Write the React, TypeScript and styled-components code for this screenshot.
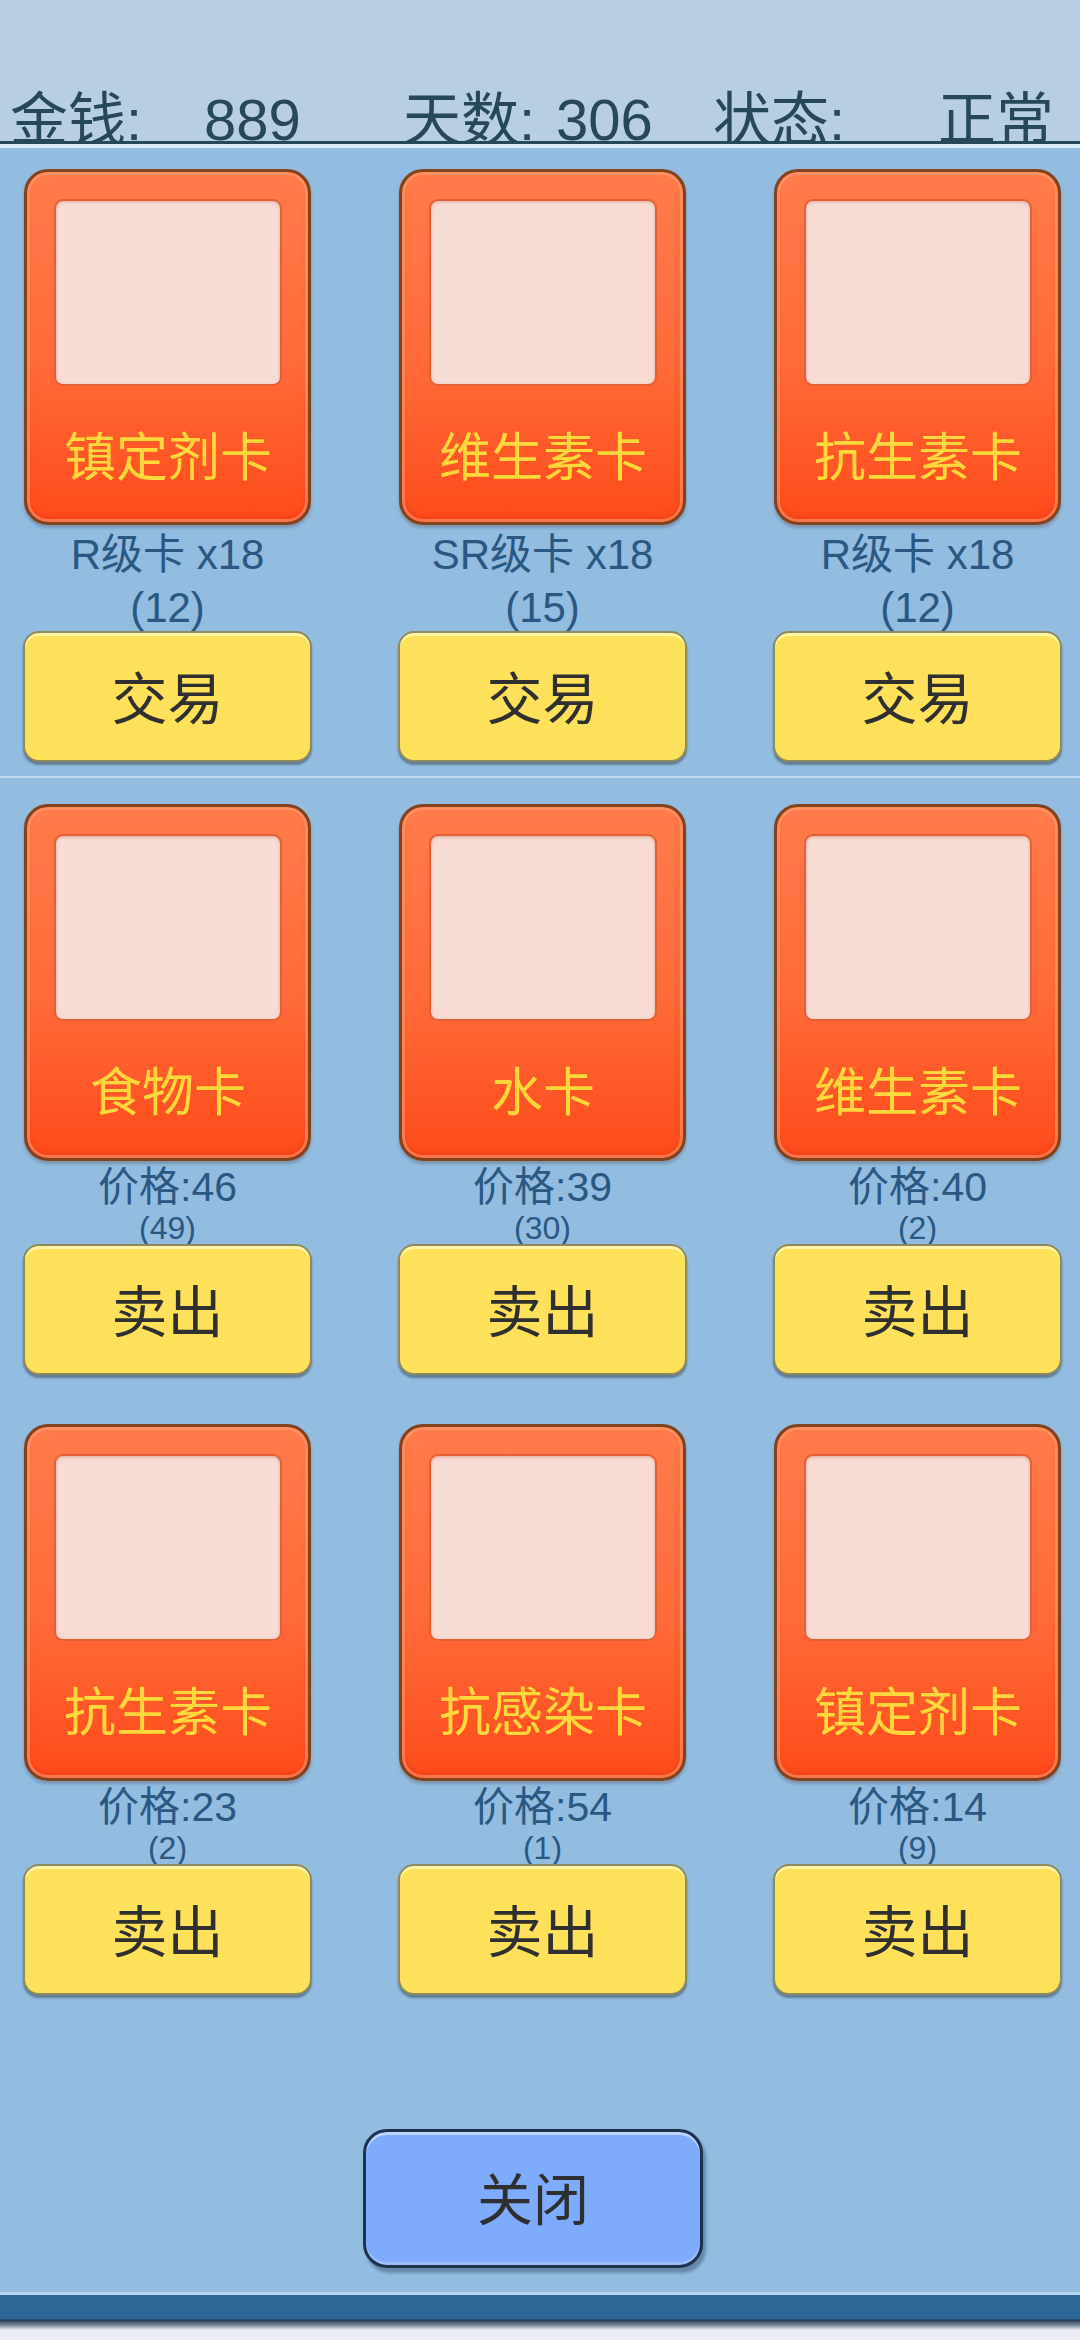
import React from "react"
import styled, { createGlobalStyle } from "styled-components"

const GlobalStyle = createGlobalStyle`
  html, body {
    margin: 0;
    padding: 0;
    background: #e8eef3;
  }
  body {
    font-family: "Liberation Sans", "Noto Sans CJK SC", sans-serif;
  }
`

const Screen = styled.div`
  width: 1080px;
  height: 2340px;
  display: flex;
  flex-direction: column;
  overflow: hidden;
`

const Header = styled.div`
  height: 141px;
  flex: none;
  background: #b8cee3;
  display: flex;
  align-items: flex-end;
  padding-left: 10px;
  color: #27485b;
  font-size: 58px;
  line-height: 42px;
`

const Stat = styled.div<{ $width: number }>`
  width: ${(p) => p.$width}px;
  display: flex;
  flex: none;
  white-space: nowrap;
`

const StatLabel = styled.span<{ $width: number }>`
  width: ${(p) => p.$width}px;
  flex: none;
`

const HeaderRule = styled.div`
  height: 3px;
  flex: none;
  background: #27485b;
  border-bottom: 4px solid #dde9f6;
`

const Panel = styled.div`
  flex: 1;
  background: #92bce0;
  display: flex;
  flex-direction: column;
  padding-top: 21px;
`

const Grid = styled.div<{ $rowGap: number }>`
  display: grid;
  grid-template-columns: repeat(3, 289px);
  column-gap: 86px;
  row-gap: ${(p) => p.$rowGap}px;
  padding-left: 23px;
`

const Slot = styled.div`
  display: flex;
  flex-direction: column;
  align-items: stretch;
`

const Card = styled.div<{ $height: number }>`
  height: ${(p) => p.$height}px;
  margin: 0 1px;
  box-sizing: border-box;
  border: 3px solid #82421c;
  border-radius: 24px;
  background: linear-gradient(180deg, #ff7c4a 0%, #ff6a38 55%, #ff4a1b 100%);
  box-shadow: inset 0 0 0 3px rgba(255, 160, 120, 0.55),
    inset 0 -4px 6px rgba(200, 40, 0, 0.35), 0 3px 3px rgba(60, 40, 30, 0.25);
  display: flex;
  flex-direction: column;
  padding: 27px 26px 0 27px;
`

const Picture = styled.div`
  height: 187px;
  flex: none;
  box-sizing: border-box;
  background: #f8dbd2;
  border: 2px solid #e35f36;
  border-radius: 9px;
  box-shadow: inset 0 1px 3px rgba(180, 70, 40, 0.35);
`

const CardName = styled.div`
  flex: 1;
  display: flex;
  align-items: center;
  justify-content: center;
  padding-bottom: 2px;
  font-family: "Noto Sans CJK SC", sans-serif;
  font-size: 52px;
  color: #ffd83c;
  white-space: nowrap;
`

const Caption = styled.div<{ $height: number }>`
  height: ${(p) => p.$height}px;
  display: flex;
  flex-direction: column;
  align-items: center;
  color: #2b5882;
  white-space: nowrap;
`

const CaptionLine = styled.div<{ $size: number; $lh: number }>`
  font-size: ${(p) => p.$size}px;
  line-height: ${(p) => p.$lh}px;
`

const YellowButton = styled.button`
  height: 131px;
  box-sizing: border-box;
  margin: 0;
  padding: 0 0 4px;
  border: 2px solid #8d8a5e;
  border-radius: 16px;
  background: #fde15a;
  box-shadow: inset 0 3px 0 #fff3a6, 0 3px 2px rgba(40, 50, 60, 0.45);
  font-family: "Noto Sans CJK SC", sans-serif;
  font-size: 56px;
  color: #2f2f2f;
`

const Separator = styled.div`
  height: 2px;
  margin: 14px 0 26px;
  background: #c4dcf0;
`

const CloseButton = styled.button`
  align-self: flex-start;
  margin: 134px 0 0 363px;
  width: 340px;
  height: 139px;
  box-sizing: border-box;
  padding: 0 0 6px;
  border: 3px solid #1d334d;
  border-radius: 24px;
  background: #7eabfb;
  box-shadow: inset 0 3px 0 #bcd5ff, inset 0 -3px 0 #9dbff9, 3px 5px 3px rgba(20, 40, 70, 0.35);
  font-family: "Noto Sans CJK SC", sans-serif;
  font-size: 56px;
  color: #2f2f2f;
`

const Footer = styled.div`
  height: 48px;
  flex: none;
  background: linear-gradient(
    180deg,
    #b7d5f0 0px,
    #b7d5f0 3px,
    #2f6698 3px,
    #2f6698 27px,
    #213a55 28px,
    #8a98a6 34px,
    #e8eef3 38px,
    #e8eef3 48px
  );
`

const tradeCards = [
  { name: "镇定剂卡", grade: "R级卡 x18", count: 12 },
  { name: "维生素卡", grade: "SR级卡 x18", count: 15 },
  { name: "抗生素卡", grade: "R级卡 x18", count: 12 },
]

const sellCards = [
  { name: "食物卡", price: 46, count: 49 },
  { name: "水卡", price: 39, count: 30 },
  { name: "维生素卡", price: 40, count: 2 },
  { name: "抗生素卡", price: 23, count: 2 },
  { name: "抗感染卡", price: 54, count: 1 },
  { name: "镇定剂卡", price: 14, count: 9 },
]

export default function App() {
  return (
    <Screen>
      <GlobalStyle />
      <Header>
        <Stat $width={393}>
          <StatLabel $width={194}>金钱:</StatLabel>
          <span>889</span>
        </Stat>
        <Stat $width={310}>
          <StatLabel $width={153}>天数:</StatLabel>
          <span>306</span>
        </Stat>
        <Stat $width={360}>
          <StatLabel $width={225}>状态:</StatLabel>
          <span>正常</span>
        </Stat>
      </Header>
      <HeaderRule />
      <Panel>
        <Grid $rowGap={0}>
          {tradeCards.map((c, i) => (
            <Slot key={i}>
              <Card $height={356}>
                <Picture />
                <CardName>{c.name}</CardName>
              </Card>
              <Caption $height={106}>
                <CaptionLine $size={42} $lh={59}>
                  {c.grade}
                </CaptionLine>
                <CaptionLine $size={42} $lh={47}>
                  ({c.count})
                </CaptionLine>
              </Caption>
              <YellowButton>交易</YellowButton>
            </Slot>
          ))}
        </Grid>
        <Separator />
        <Grid $rowGap={49}>
          {sellCards.map((c, i) => (
            <Slot key={i}>
              <Card $height={357}>
                <Picture />
                <CardName>{c.name}</CardName>
              </Card>
              <Caption $height={83}>
                <CaptionLine $size={41} $lh={52}>
                  价格:{c.price}
                </CaptionLine>
                <CaptionLine $size={32} $lh={31}>
                  ({c.count})
                </CaptionLine>
              </Caption>
              <YellowButton>卖出</YellowButton>
            </Slot>
          ))}
        </Grid>
        <CloseButton>关闭</CloseButton>
      </Panel>
      <Footer />
    </Screen>
  )
}
